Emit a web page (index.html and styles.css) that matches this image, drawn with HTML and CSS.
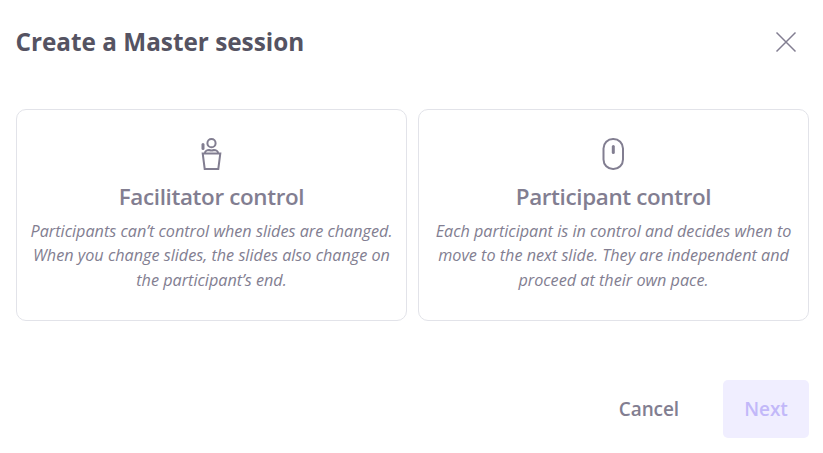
FILE: index.html
```html
<!DOCTYPE html>
<html lang="en">
<head>
    <meta charset="UTF-8">
    <meta name="viewport" content="width=device-width, initial-scale=1.0">
    <title>Create a Master session</title>
    <link rel="stylesheet" href="styles.css">
</head>
<body>

    <div class="modal">
        <header class="modal-header">
            <h1>Create a Master session</h1>
            <button class="close-btn" aria-label="Close">
                <svg width="22" height="22" viewBox="0 0 22 22">
                    <path d="M1.5 1.5l19 19M20.5 1.5l-19 19"/>
                </svg>
            </button>
        </header>

        <div class="options">
            <div class="option">
                <svg class="option-icon" width="32" height="32" viewBox="0 0 32 32">
                    <circle cx="15.5" cy="5.2" r="4.1"/>
                    <path d="M9 15c0-2 2.2-3 4-3q2.5 1.2 5 0c1.8 0 4 1 4 3"/>
                    <path d="M6.7 15.5h17.6l-2 15.5H8.7z"/>
                    <path class="thick" d="M7 6.5v4"/>
                </svg>
                <h2>Facilitator control</h2>
                <p>Participants can’t control when slides are changed. When you change slides, the slides also change on the participant’s end.</p>
            </div>
            <div class="option">
                <svg class="option-icon" width="32" height="32" viewBox="0 0 32 32">
                    <rect x="5.5" y="1" width="19.5" height="30" rx="9.5"/>
                    <path class="thick" d="M15.3 8.5v6"/>
                </svg>
                <h2>Participant control</h2>
                <p>Each participant is in control and decides when to move to the next slide. They are independent and proceed at their own pace.</p>
            </div>
        </div>

        <footer class="modal-footer">
            <button class="btn">Cancel</button>
            <button class="btn btn-primary" disabled>Next</button>
        </footer>
    </div>

</body>
</html>
```
FILE: styles.css
```css
:root {
    --title-color: #555362;
    --text-color: #827e91;
    --border-color: #e2e3e9;
    --primary-bg: #f0eeff;
    --primary-color: #c2b8f9;
}

body {
    margin: 0;
    font-family: 'Open Sans', sans-serif;
    background-color: #ffffff;
    color: var(--text-color);
}

.modal {
    height: 453px;
    padding: 24px 14px 15px 16px;
    display: flex;
    flex-direction: column;
    box-sizing: border-box;
}

.modal-header {
    display: flex;
    justify-content: space-between;
    align-items: center;
    height: 36px;
    padding-right: 12px;
    margin-bottom: 49px;
}

h1 {
    margin: 0 0 0 -0.5px;
    font-size: 24.3px;
    font-weight: 700;
    line-height: 32px;
    color: var(--title-color);
}

.close-btn {
    display: flex;
    padding: 0;
    border: none;
    background: none;
    cursor: pointer;
}

svg {
    fill: none;
    stroke: var(--text-color);
    stroke-width: 1.5;
}

.options {
    display: grid;
    grid-template-columns: 1fr 1fr;
    gap: 11px;
    height: 212px;
}

.option {
    padding: 28px 12px 0;
    border: 1px solid var(--border-color);
    border-radius: 10px;
    text-align: center;
    box-sizing: border-box;
    cursor: pointer;
}

.option-icon {
    display: block;
    margin: 0 auto;
    stroke-width: 2;
}

.thick {
    stroke-width: 3;
    stroke-linecap: round;
}

h2 {
    margin: 12px 0 6.5px;
    font-size: 22.4px;
    font-weight: 600;
    line-height: 30px;
    letter-spacing: -0.35px;
}

p {
    margin: 0 -4px;
    font-size: 16.2px;
    font-style: italic;
    line-height: 24.5px;
}

.modal-footer {
    display: flex;
    justify-content: flex-end;
    gap: 23px;
    margin-top: auto;
}

.btn {
    height: 58px;
    padding: 0 21px;
    border: none;
    border-radius: 5px;
    background: none;
    font-family: inherit;
    font-size: 19px;
    font-weight: 600;
    letter-spacing: -0.1px;
    color: var(--text-color);
    cursor: pointer;
}

.btn-primary {
    width: 86px;
    background-color: var(--primary-bg);
    color: var(--primary-color);
}
```
